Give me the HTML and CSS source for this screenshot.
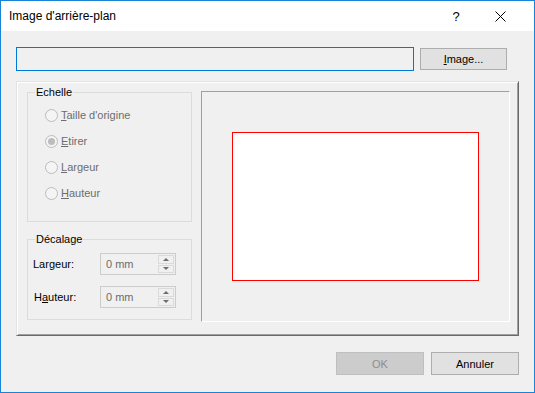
FILE: index.html
```html
<!DOCTYPE html>
<html lang="fr">

<head>
    <meta charset="UTF-8">
    <title>Image d'arrière-plan</title>
    <link rel="stylesheet" href="styles.css">
</head>

<body>
    <div class="window">
        <div class="titlebar">
            <span class="title">Image d'arrière-plan</span>
            <span class="title_btn help">?</span>
            <span class="title_btn close">
                <svg width="11" height="11" viewBox="0 0 11 11">
                    <path d="M0.5 0.5 L10.5 10.5 M10.5 0.5 L0.5 10.5" stroke="#000" stroke-width="1" fill="none" />
                </svg>
            </span>
        </div>
        <div class="dialog_body">
            <div class="file_row">
                <div class="file_input"></div>
                <button class="btn btn_image"><u>I</u>mage...</button>
            </div>
            <div class="panel">
                <div class="left_col">
                    <!-- echelle : boutons radio désactivés -->
                    <fieldset class="group group_scale">
                        <legend>Echelle</legend>
                        <div class="radio"><span class="radio_dot"></span><span><u>T</u>aille d'origine</span></div>
                        <div class="radio"><span class="radio_dot checked"></span><span><u>E</u>tirer</span></div>
                        <div class="radio"><span class="radio_dot"></span><span><u>L</u>argeur</span></div>
                        <div class="radio"><span class="radio_dot"></span><span><u>H</u>auteur</span></div>
                    </fieldset>
                    <fieldset class="group group_offset">
                        <legend>Décalage</legend>
                        <div class="field_row">
                            <span class="field_label">Lar<u>g</u>eur:</span>
                            <div class="spin">
                                <span class="spin_value">0 mm</span>
                                <span class="spin_btns">
                                    <span class="spin_btn"><span class="arrow_up"></span></span>
                                    <span class="spin_btn"><span class="arrow_down"></span></span>
                                </span>
                            </div>
                        </div>
                        <div class="field_row">
                            <span class="field_label label_shift">H<u>a</u>uteur:</span>
                            <div class="spin">
                                <span class="spin_value">0 mm</span>
                                <span class="spin_btns">
                                    <span class="spin_btn"><span class="arrow_up"></span></span>
                                    <span class="spin_btn"><span class="arrow_down"></span></span>
                                </span>
                            </div>
                        </div>
                    </fieldset>
                </div>
                <!-- aperçu de la page -->
                <div class="preview">
                    <div class="page"></div>
                </div>
            </div>
            <div class="footer">
                <button class="btn btn_disabled">OK</button>
                <button class="btn">Annuler</button>
            </div>
        </div>
    </div>
</body>

</html>
```

FILE: styles.css
```css
* {
    margin: 0;
    padding: 0;
    box-sizing: border-box;
}

body {
    font-family: "Liberation Sans", Arial, sans-serif;
    font-size: 11px;
    color: #000;
    background-color: #f0f0f0;
}

.window {
    display: flex;
    flex-direction: column;
    width: 535px;
    height: 393px;
    border: 1px solid #1883d7;
}

.titlebar {
    display: flex;
    align-items: center;
    height: 30px;
    padding-left: 8px;
    padding-right: 12px;
    background-color: #fff;
    font-size: 12px;
}

.title {
    flex: 1;
}

.title_btn {
    display: flex;
    justify-content: center;
    align-items: center;
    width: 44px;
    height: 30px;
}

.help {
    font-size: 13px;
}

.dialog_body {
    display: flex;
    flex-direction: column;
    flex: 1;
    padding: 16px 15px 17px 15px;
}

.file_row {
    display: flex;
    align-items: center;
    gap: 6px;
    height: 24px;
}

.file_input {
    width: 398px;
    height: 24px;
    border: 1px solid #0078d7;
    background-color: #f0f0f0;
}

.btn {
    width: 88px;
    height: 23px;
    border: 1px solid #adadad;
    background-color: #e1e1e1;
    font-family: inherit;
    font-size: 11px;
    color: #000;
}

.btn_image {
    width: 87px;
    height: 22px;
}

.btn_disabled {
    border-color: #bfbfbf;
    background-color: #cccccc;
    color: #8d8d8d;
}

.panel {
    display: flex;
    align-items: flex-start;
    gap: 9px;
    height: 255px;
    margin-top: 10px;
    padding: 0 8px 0 10px;
    border: 1px solid;
    border-color: #e3e3e3 #696969 #696969 #e3e3e3;
    box-shadow: inset 1px 1px #fff, inset -1px -1px #a0a0a0;
}

.left_col {
    display: flex;
    flex-direction: column;
    gap: 11px;
    width: 165px;
    margin-top: 4px;
}

.group {
    border: 1px solid #dcdcdc;
    padding: 0 0 0 17px;
}

.group legend {
    margin-left: -10px;
    padding: 0 1px;
    line-height: 12px;
}

.group_scale {
    height: 136px;
    padding-top: 4px;
}

.group_offset {
    height: 87px;
    padding: 8px 0 0 5px;
}

.group_offset legend {
    margin-left: 2px;
}

.radio {
    display: flex;
    align-items: center;
    gap: 3px;
    height: 26px;
    color: #6d6d6d;
}

.radio_dot {
    display: flex;
    justify-content: center;
    align-items: center;
    width: 13px;
    height: 13px;
    border: 1px solid #bcbcbc;
    border-radius: 50%;
    background-color: #f4f4f4;
}

.radio_dot.checked::after {
    content: "";
    width: 7px;
    height: 7px;
    border-radius: 50%;
    background-color: #bcbcbc;
}

.field_row {
    display: flex;
    align-items: center;
    height: 22px;
    margin-bottom: 11px;
}

.field_label {
    width: 67px;
}

.label_shift {
    padding-left: 1px;
}

.spin {
    display: flex;
    align-items: center;
    width: 76px;
    height: 22px;
    border: 1px solid #cccccc;
    background-color: #f0f0f0;
}

.spin_value {
    flex: 1;
    padding-left: 5px;
    color: #6d6d6d;
}

.spin_btns {
    display: flex;
    flex-direction: column;
    gap: 1px;
    width: 16px;
    height: 18px;
    margin-right: 1px;
}

.spin_btn {
    display: flex;
    justify-content: center;
    align-items: center;
    flex: 1;
    border: 1px solid #dadada;
    background-color: #f0f0f0;
}

.arrow_up,
.arrow_down {
    width: 0;
    height: 0;
    border-left: 3px solid transparent;
    border-right: 3px solid transparent;
}

.arrow_up {
    border-bottom: 3px solid #6d6d6d;
}

.arrow_down {
    border-top: 3px solid #6d6d6d;
}

.preview {
    display: flex;
    justify-content: center;
    align-items: center;
    width: 309px;
    height: 231px;
    margin-top: 9px;
    border: 1px solid;
    border-color: #a0a0a0 #fff #fff #a0a0a0;
}

.page {
    width: 247px;
    height: 149px;
    border: 1px solid #f00;
    background-color: #fff;
}

.footer {
    display: flex;
    justify-content: flex-end;
    gap: 7px;
    margin-top: 16px;
}
```
